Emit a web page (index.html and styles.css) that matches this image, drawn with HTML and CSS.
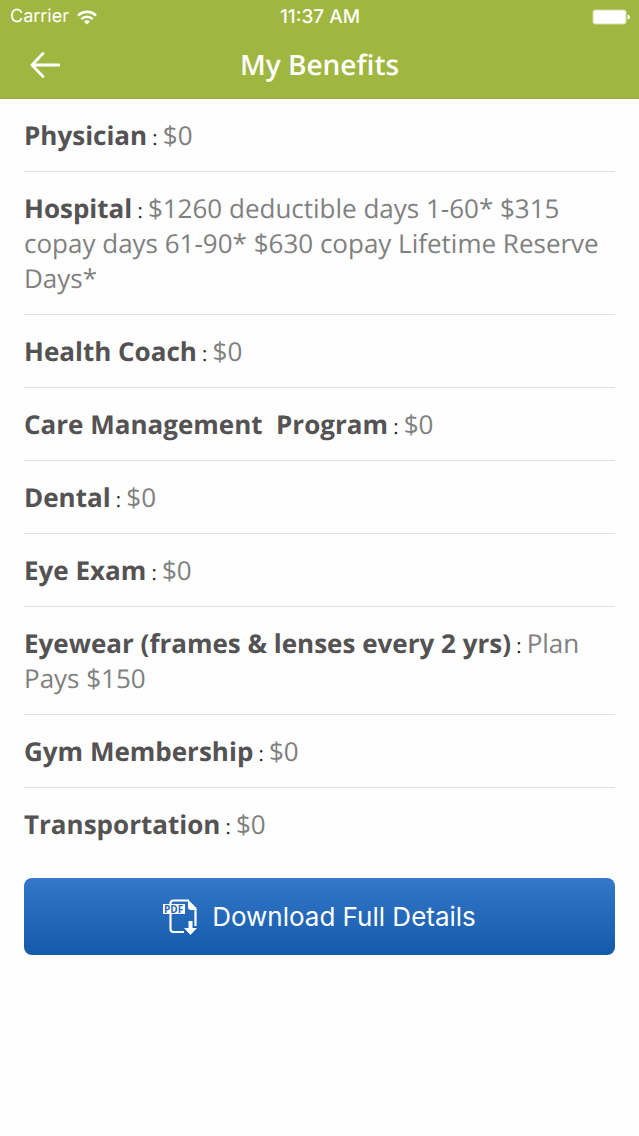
FILE: index.html
```html
<!DOCTYPE html>
<html lang="en">
<head>
<meta charset="utf-8">
<meta name="viewport" content="width=device-width, initial-scale=1">
<title>My Benefits</title>
<link rel="stylesheet" href="styles.css">
</head>
<body>
<header class="top">
  <div class="status">
    <div class="carrier">
      <span>Carrier</span>
      <svg class="wifi" viewBox="0 0 20 15" aria-hidden="true">
        <g fill="none" stroke="#fff" stroke-width="2.600">
          <path d="M1 5.600a12.700 12.700 0 0 1 18 0"/>
          <path d="M4.300 9.200a8 8 0 0 1 11.400 0"/>
        </g>
        <path fill="#fff" d="M10 14.500 7 11.600a4.300 4.300 0 0 1 6 0z"/>
      </svg>
    </div>
    <span class="clock">11:37 AM</span>
    <svg class="battery" viewBox="0 0 38 16" aria-hidden="true">
      <rect x="0.500" y="0.500" width="34" height="15" rx="3" fill="#fff" fill-opacity=".55"/>
      <rect x="1.500" y="1.500" width="32" height="13" rx="2" fill="#fff"/>
      <path d="M35.500 5.500q2.500.5 2.500 2.500t-2.500 2.500z" fill="#fff"/>
    </svg>
  </div>
  <div class="nav">
    <button class="back" type="button" aria-label="Back">
      <svg viewBox="0 0 30 26" aria-hidden="true"><path d="M29 13H2M13 1.500 2 13l11 11.500" fill="none" stroke="#fff" stroke-width="2.800" stroke-linecap="round" stroke-linejoin="round"/></svg>
    </button>
    <h1 class="title">My Benefits</h1>
  </div>
</header>
<main class="content">
  <ul class="benefits">
    <li class="benefit"><b class="name">Physician</b><span class="colon"> : </span>$0</li>
    <li class="benefit"><b class="name">Hospital</b><span class="colon"> : </span>$1260 deductible days 1-60* $315 copay days 61-90* $630 copay Lifetime Reserve Days*</li>
    <li class="benefit"><b class="name">Health Coach</b><span class="colon"> : </span>$0</li>
    <li class="benefit"><b class="name">Care Management&nbsp; Program</b><span class="colon"> : </span>$0</li>
    <li class="benefit"><b class="name">Dental</b><span class="colon"> : </span>$0</li>
    <li class="benefit"><b class="name">Eye Exam</b><span class="colon"> : </span>$0</li>
    <li class="benefit"><b class="name">Eyewear (frames &amp; lenses every 2 yrs)</b><span class="colon"> : </span>Plan Pays $150</li>
    <li class="benefit"><b class="name">Gym Membership</b><span class="colon"> : </span>$0</li>
    <li class="benefit"><b class="name">Transportation</b><span class="colon"> : </span>$0</li>
  </ul>
  <button class="download" type="button">
    <svg class="pdf" viewBox="0 0 36 36" aria-hidden="true">
      <path d="M7.500 5V4.500q0-3 3-3H26M7.500 15v15q0 3 3 3H21M32.500 10v17" fill="none" stroke="#fff" stroke-width="2.200"/>
      <path d="M25 .5 33.500 9v2H28q-3 0-3-3zM25.500 22h4v7h4.500l-6.500 7-6.500-7h4.500z" fill="#fff"/>
      <rect y="5" width="22" height="10" fill="#fff"/>
      <text class="pdf-label" x="1" y="14">PDF</text>
    </svg>
    <span>Download Full Details</span>
  </button>
</main>
</body>
</html>
```
FILE: styles.css
```css
* { box-sizing: border-box; }
body { margin: 0; background: #fefefe; font-family: "Open Sans", sans-serif; text-rendering: geometricPrecision; }
.top { background: #9fb740; color: #fff; border-bottom: 1px solid #9aab55; }
.status { display: grid; grid-template-columns: 1fr auto 1fr; align-items: center; height: 32px; padding: 0 9px 0 10px; font: 500 19px/34px Inter, sans-serif; }
.carrier { display: flex; align-items: center; gap: 8px; font-size: 18px; font-weight: 400; }
.wifi { width: 20px; height: 15px; }
.battery { width: 38px; height: 16px; justify-self: end; }
.nav { display: grid; grid-template-columns: 1fr auto 1fr; align-items: center; height: 66px; padding: 0 30px; }
.back { display: flex; justify-self: start; padding: 0; border: 0; background: none; }
.back svg { width: 30px; height: 26px; }
.title { margin: 0; font-size: 28px; line-height: 36px; font-weight: 600; }
.content { padding: 0 24px; }
.benefits { list-style: none; margin: 0; padding: 0; }
.benefit { padding: 19px 0 18px; border-bottom: 1px solid #e0e0e0; color: #808080; font-size: 26px; line-height: 35px; }
.benefit:last-child { border-bottom: 0; }
.name { color: #545253; font-weight: 700; }
.colon { color: #222; font-size: 20px; line-height: 1; }
.download { display: flex; align-items: center; justify-content: center; gap: 13px; width: 100%; height: 77px; margin-top: 18px; padding: 0; border: 0; border-radius: 8px; background: linear-gradient(#3577c9, #145aab); color: #fff; font: 400 26px Inter, sans-serif; }
.pdf { width: 36px; height: 36px; }
.pdf-label { fill: #2768b9; font: 700 10px "Open Sans", sans-serif; }
```
